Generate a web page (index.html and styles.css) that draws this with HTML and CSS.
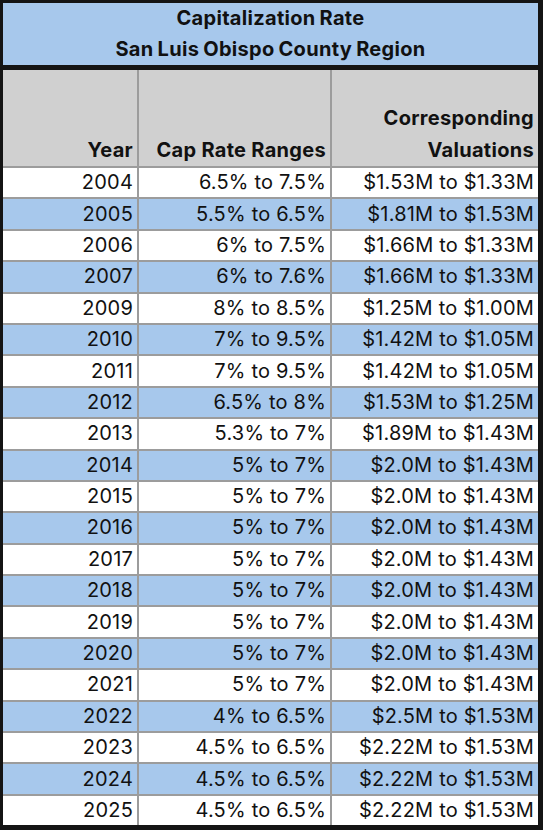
FILE: index.html
```html
<!DOCTYPE html>
<html lang="en">

<head>
    <meta charset="UTF-8">
    <meta name="viewport" content="width=device-width, initial-scale=1.0">
    <title>Capitalization Rate</title>
    <link rel="stylesheet" href="styles.css">
</head>

<body>
    <div class="sheet">
        <div class="title">
            <div>Capitalization Rate</div>
            <div>San Luis Obispo County Region</div>
        </div>

        <table class="rates">
            <colgroup>
                <col class="col-year">
                <col class="col-range">
                <col class="col-value">
            </colgroup>
            <thead>
                <tr>
                    <th>Year</th>
                    <th>Cap Rate Ranges</th>
                    <th>Corresponding<br>Valuations</th>
                </tr>
            </thead>
            <tbody>
                <tr><td>2004</td><td>6.5% to 7.5%</td><td>$1.53M to $1.33M</td></tr>
                <tr><td>2005</td><td>5.5% to 6.5%</td><td>$1.81M to $1.53M</td></tr>
                <tr><td>2006</td><td>6% to 7.5%</td><td>$1.66M to $1.33M</td></tr>
                <tr><td>2007</td><td>6% to 7.6%</td><td>$1.66M to $1.33M</td></tr>
                <tr><td>2009</td><td>8% to 8.5%</td><td>$1.25M to $1.00M</td></tr>
                <tr><td>2010</td><td>7% to 9.5%</td><td>$1.42M to $1.05M</td></tr>
                <tr><td>2011</td><td>7% to 9.5%</td><td>$1.42M to $1.05M</td></tr>
                <tr><td>2012</td><td>6.5% to 8%</td><td>$1.53M to $1.25M</td></tr>
                <tr><td>2013</td><td>5.3% to 7%</td><td>$1.89M to $1.43M</td></tr>
                <tr><td>2014</td><td>5% to 7%</td><td>$2.0M to $1.43M</td></tr>
                <tr><td>2015</td><td>5% to 7%</td><td>$2.0M to $1.43M</td></tr>
                <tr><td>2016</td><td>5% to 7%</td><td>$2.0M to $1.43M</td></tr>
                <tr><td>2017</td><td>5% to 7%</td><td>$2.0M to $1.43M</td></tr>
                <tr><td>2018</td><td>5% to 7%</td><td>$2.0M to $1.43M</td></tr>
                <tr><td>2019</td><td>5% to 7%</td><td>$2.0M to $1.43M</td></tr>
                <tr><td>2020</td><td>5% to 7%</td><td>$2.0M to $1.43M</td></tr>
                <tr><td>2021</td><td>5% to 7%</td><td>$2.0M to $1.43M</td></tr>
                <tr><td>2022</td><td>4% to 6.5%</td><td>$2.5M to $1.53M</td></tr>
                <tr><td>2023</td><td>4.5% to 6.5%</td><td>$2.22M to $1.53M</td></tr>
                <tr><td>2024</td><td>4.5% to 6.5%</td><td>$2.22M to $1.53M</td></tr>
                <tr><td>2025</td><td>4.5% to 6.5%</td><td>$2.22M to $1.53M</td></tr>
            </tbody>
        </table>
    </div>
</body>

</html>
```

FILE: styles.css
```css
html {
    background-color: #141414;
}

body {
    font-family: 'Inter', 'Liberation Sans', sans-serif;
    margin: 0;
    color: #111;
}

.sheet {
    width: 535px;
    margin: 3px 5px 0 3px;
}

.title {
    background-color: #a7c8ec;
    text-align: center;
    font-weight: bold;
    font-size: 20px;
    line-height: 31px;
    letter-spacing: 0.3px;
    word-spacing: -1px;
    border-bottom: 5px solid #141414;
}

.rates {
    width: 100%;
    border-collapse: collapse;
    table-layout: fixed;
    font-size: 20px;
}

.col-year {
    width: 135px;
}

.col-range {
    width: 193px;
}

th, td {
    border: 2px solid #9c9c9c;
    padding: 0 4px 0 0;
    text-align: right;
    white-space: nowrap;
}

th:first-child, td:first-child {
    border-left: none;
}

th:last-child, td:last-child {
    border-right: none;
}

th {
    background-color: #d0d0d0;
    font-weight: bold;
    vertical-align: bottom;
    height: 96px;
    line-height: 32px;
    letter-spacing: 0.3px;
    border-top: none;
}

td {
    height: 29.4px;
    line-height: 29px;
    letter-spacing: 0.2px;
    background-color: #fff;
}

tbody tr:nth-child(even) td {
    background-color: #a7c8ec;
}

tbody tr:last-child td {
    border-bottom: none;
}
```
